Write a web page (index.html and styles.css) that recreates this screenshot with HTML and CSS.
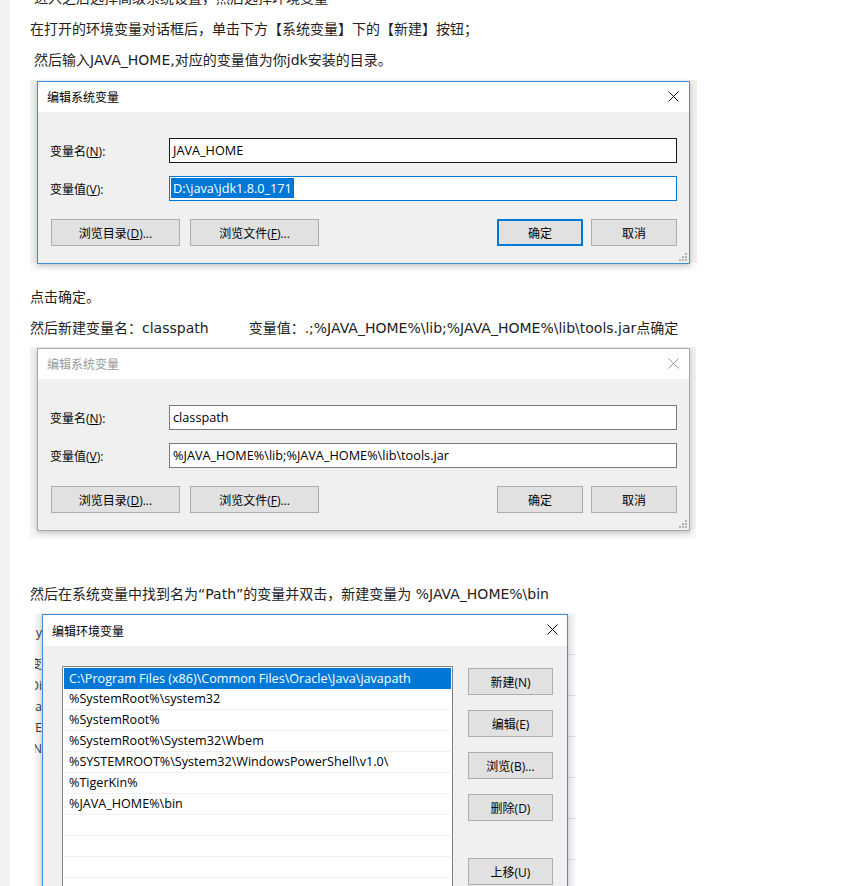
FILE: index.html
```html
<html>
<head>
    <meta charset="utf-8">
    <link rel="stylesheet" href="styles.css">
</head>
<body>
    <div class="page">
        <p class="indent top">进入之后选择高级系统设置，然后选择环境变量</p>
        <p>在打开的环境变量对话框后，单击下方【系统变量】下的【新建】按钮；</p>
        <p class="indent">然后输入JAVA_HOME,对应的变量值为你jdk安装的目录。</p>

        <div class="shot shot-one">
            <div class="dialog">
                <div class="titlebar">
                    <span class="title">编辑系统变量</span>
                    <svg class="close" width="11" height="11" viewBox="0 0 11 11"><path d="M0.5 0.5L10.5 10.5M10.5 0.5L0.5 10.5" stroke="#111" stroke-width="1"/></svg>
                </div>
                <div class="body">
                    <div class="row">
                        <span class="label">变量名(<u>N</u>):</span>
                        <div class="input hover">JAVA_HOME</div>
                    </div>
                    <div class="row">
                        <span class="label">变量值(<u>V</u>):</span>
                        <div class="input focus"><span class="selected">D:\java\jdk1.8.0_171</span></div>
                    </div>
                    <div class="actions">
                        <button class="button wide">浏览目录(<u>D</u>)...</button>
                        <button class="button wide">浏览文件(<u>F</u>)...</button>
                        <span class="spacer"></span>
                        <button class="button default">确定</button>
                        <button class="button">取消</button>
                    </div>
                    <svg class="grip" width="8" height="8" viewBox="0 0 8 8"><path d="M6 0h2v2h-2zM3 3h2v2h-2zM6 3h2v2h-2zM0 6h2v2h-2zM3 6h2v2h-2zM6 6h2v2h-2z" fill="#b4b4b4"/></svg>
                </div>
            </div>
        </div>

        <p class="after-shot">点击确定。</p>
        <p>然后新建变量名：classpath&nbsp;&nbsp;&nbsp;&nbsp;&nbsp;&nbsp;&nbsp;&nbsp;&nbsp;变量值：.;%JAVA_HOME%\lib;%JAVA_HOME%\lib\tools.jar点确定</p>

        <div class="shot shot-two">
            <div class="dialog inactive">
                <div class="titlebar">
                    <span class="title">编辑系统变量</span>
                    <svg class="close" width="11" height="11" viewBox="0 0 11 11"><path d="M0.5 0.5L10.5 10.5M10.5 0.5L0.5 10.5" stroke="#9a9a9a" stroke-width="1"/></svg>
                </div>
                <div class="body">
                    <div class="row">
                        <span class="label">变量名(<u>N</u>):</span>
                        <div class="input">classpath</div>
                    </div>
                    <div class="row">
                        <span class="label">变量值(<u>V</u>):</span>
                        <div class="input">%JAVA_HOME%\lib;%JAVA_HOME%\lib\tools.jar</div>
                    </div>
                    <div class="actions">
                        <button class="button wide">浏览目录(<u>D</u>)...</button>
                        <button class="button wide">浏览文件(<u>F</u>)...</button>
                        <span class="spacer"></span>
                        <button class="button">确定</button>
                        <button class="button">取消</button>
                    </div>
                    <svg class="grip" width="8" height="8" viewBox="0 0 8 8"><path d="M6 0h2v2h-2zM3 3h2v2h-2zM6 3h2v2h-2zM0 6h2v2h-2zM3 6h2v2h-2zM6 6h2v2h-2z" fill="#b4b4b4"/></svg>
                </div>
            </div>
        </div>

        <p class="spaced">然后在系统变量中找到名为“Path”的变量并双击，新建变量为 %JAVA_HOME%\bin</p>

        <div class="shot shot-three">
            <div class="behind">
                <span>y</span>
                <span>变</span>
                <span>Di</span>
                <span>Pa</span>
                <span>TE</span>
                <span>TN</span>
            </div>
            <div class="dialog env">
                <div class="titlebar">
                    <span class="title">编辑环境变量</span>
                    <svg class="close" width="11" height="11" viewBox="0 0 11 11"><path d="M0.5 0.5L10.5 10.5M10.5 0.5L0.5 10.5" stroke="#111" stroke-width="1"/></svg>
                </div>
                <div class="body env-body">
                    <div class="list">
                        <div class="item selected">C:\Program Files (x86)\Common Files\Oracle\Java\javapath</div>
                        <div class="item">%SystemRoot%\system32</div>
                        <div class="item">%SystemRoot%</div>
                        <div class="item">%SystemRoot%\System32\Wbem</div>
                        <div class="item">%SYSTEMROOT%\System32\WindowsPowerShell\v1.0\</div>
                        <div class="item">%TigerKin%</div>
                        <div class="item">%JAVA_HOME%\bin</div>
                        <div class="item"></div>
                        <div class="item"></div>
                        <div class="item"></div>
                        <div class="item"></div>
                        <div class="item"></div>
                    </div>
                    <div class="side">
                        <button class="button">新建(N)</button>
                        <button class="button">编辑(E)</button>
                        <button class="button">浏览(B)...</button>
                        <button class="button">删除(D)</button>
                        <button class="button move">上移(U)</button>
                    </div>
                </div>
            </div>
            <div class="behind right"></div>
        </div>
    </div>
</body>
</html>
```

FILE: styles.css
```css
body {
    margin: 0;
    background-color: #fff;
    font-family: "Open Sans", "Noto Sans CJK SC", sans-serif;
    color: #222;
    overflow: hidden;
}
.page {
    border-left: 10px solid #f1f1f1;
    padding-left: 20px;
    min-height: 100vh;
}
p {
    margin: 0;
    font-family: "DejaVu Sans", "Noto Sans CJK SC", sans-serif;
    font-size: 14px;
    line-height: 31px;
}
p.top {
    margin-top: -17px;
}
p.indent {
    padding-left: 4px;
}
p.after-shot {
    margin-top: 11px;
}
p.spaced {
    margin-top: 40px;
}

/* screenshot frames */
.shot {
    display: flex;
    width: fit-content;
    background-color: #ececec;
}
.shot-one {
    margin-top: 4px;
    padding: 1px 7px 7px 7px;
    background: linear-gradient(to bottom, #efefef 0, #efefef 183px, #fafafa 183px);
}
.shot-two {
    margin-top: 3px;
    padding: 1px 6px 8px 7px;
    background: linear-gradient(to bottom, #f0f0f0 0, #f0f0f0 182px, #f7f7f7 182px);
}
.shot-three {
    margin-top: 3px;
    padding-top: 1px;
    margin-left: 5px;
    background-color: #f3f3f3;
}
.behind {
    width: 7px;
    overflow: hidden;
    direction: rtl;
    display: flex;
    flex-direction: column;
    padding-top: 8px;
    font-size: 12px;
    line-height: 21px;
    color: #333;
}
.behind span {
    white-space: nowrap;
}
.behind span:nth-child(2) {
    margin-top: 11px;
}
.behind.right {
    background: repeating-linear-gradient(to bottom, #f3f3f3 0, #f3f3f3 40px, #d8d8d8 40px, #d8d8d8 41px);
}

/* dialogs */
.dialog {
    position: relative;
    width: 653px;
    box-sizing: border-box;
    border: 1px solid #3d8ee0;
    background-color: #f0f0f0;
    box-shadow: 0 2px 5px rgba(0, 0, 0, 0.22);
    font-size: 12px;
    color: #000;
}
.dialog.inactive {
    border-color: #a8a8a8;
}
.dialog.inactive .title {
    color: #9a9a9a;
}
.titlebar {
    height: 30px;
    background-color: #fff;
    display: flex;
    align-items: center;
    justify-content: space-between;
    padding: 0 10px 0 9px;
}
.close {
    margin-top: -2px;
}
.body {
    padding: 26px 12px 17px 12px;
}
.row {
    display: flex;
    align-items: center;
    margin-bottom: 13px;
}
.label {
    width: 119px;
}
.input {
    flex: 1;
    height: 25px;
    box-sizing: border-box;
    line-height: 23px;
    border: 1px solid #7a7a7a;
    background-color: #fff;
    padding: 0 3px;
    white-space: nowrap;
    font-size: 12.7px;
}
.input.hover {
    border-color: #1a1a1a;
}
.input.focus {
    border-color: #0078d7;
    padding-left: 1px;
}
.selected {
    background-color: #0078d7;
    color: #fff;
    padding: 1px 2px;
}
.actions {
    display: flex;
    gap: 10px;
    margin-top: 18px;
    padding-left: 1px;
}
.spacer {
    flex: 1;
}
.actions .button + .button:last-child {
    margin-left: -2px;
}
.button {
    width: 86px;
    height: 27px;
    box-sizing: border-box;
    background-color: #e1e1e1;
    border: 1px solid #adadad;
    font-family: inherit;
    font-size: 12px;
    color: #000;
    padding: 0;
}
.button.wide {
    width: 129px;
}
.button.default {
    border-color: #0078d7;
    box-shadow: inset 0 0 0 1px #0078d7;
}
.grip {
    position: absolute;
    right: 2px;
    bottom: 2px;
}

/* path editor */
.dialog.env {
    width: 526px;
    height: 300px;
}
.env .titlebar {
    height: 31px;
    padding-right: 9px;
}
.env-body {
    display: flex;
    gap: 15px;
    padding: 20px 14px 0 19px;
}
.list {
    width: 391px;
    box-sizing: border-box;
    border: 1px solid #828282;
    background-color: #fff;
    padding: 1px;
    height: 260px;
    overflow: hidden;
}
.item {
    height: 21px;
    box-sizing: border-box;
    line-height: 20px;
    border-bottom: 1px solid #f0f0f0;
    padding-left: 5px;
    white-space: nowrap;
    font-size: 12.6px;
}
.item.selected {
    background-color: #0078d7;
    color: #fff;
    border-bottom-color: #0078d7;
}
.side {
    display: flex;
    flex-direction: column;
    gap: 15px;
    padding-top: 2px;
}
.side .button {
    width: 85px;
}
.side .button.move {
    margin-top: 22px;
}
```
